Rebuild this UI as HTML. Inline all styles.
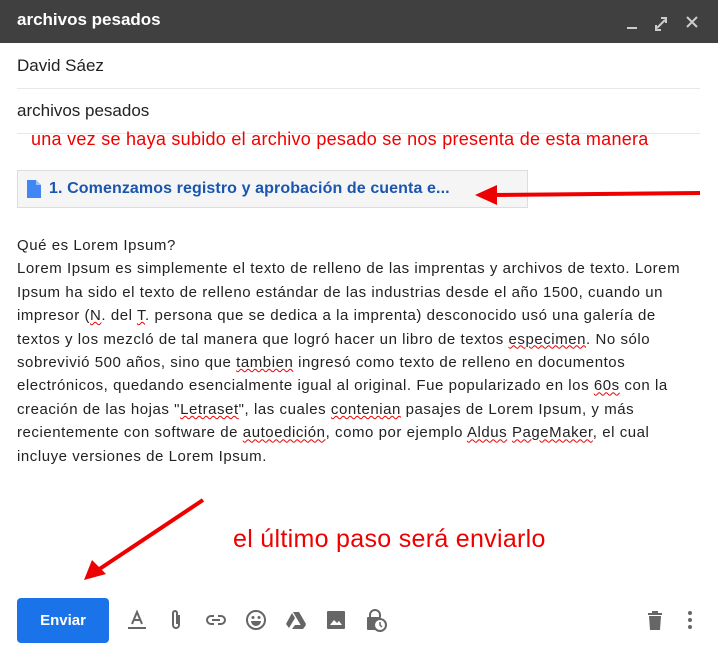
<!DOCTYPE html>
<html><head><meta charset="utf-8"><style>
body{margin:0;width:718px;height:648px;background:#fff;font-family:"Liberation Sans",sans-serif;position:relative;overflow:hidden}
.hdr{position:absolute;left:0;top:0;width:718px;height:43px;background:#404040;color:#fff}
.hdr .t{position:absolute;left:17px;top:10px;font-size:17px;font-weight:bold}
.f{position:absolute;left:17px;width:683px;border-bottom:1px solid #e8e8e8;color:#222;font-size:17px}
.note{position:absolute;left:31px;top:129px;color:#e00;font-size:18px;letter-spacing:0.27px;white-space:nowrap}
.att{position:absolute;left:17px;top:170px;width:509px;height:36px;background:#f5f5f5;border:1px solid #ddd}
.att span{position:absolute;left:31px;top:9px;color:#1a55b0;font-weight:bold;font-size:16px;letter-spacing:0.1px;white-space:nowrap}
.body{position:absolute;left:17px;top:234px;width:700px;font-size:15px;letter-spacing:0.55px;line-height:23.4px;color:#222;white-space:nowrap}
u{text-decoration:underline wavy #e00;text-decoration-thickness:1px}
.btn{position:absolute;left:17px;top:598px;width:92px;height:45px;background:#1a73e8;border-radius:4px;color:#fff;font-weight:bold;font-size:15px;text-align:center;line-height:45px}
.red2{position:absolute;left:233px;top:525px;color:#e00;font-size:25px;letter-spacing:0.3px;white-space:nowrap}
svg.i{position:absolute;top:609px}
</style></head><body>
<div class="hdr"><div class="t">archivos pesados</div>
<svg style="position:absolute;left:620px;top:12px" width="90" height="20"><g stroke="#ccc" stroke-width="2" fill="none"><path d="M7 16h10"/><path d="M37 16l8-8M41 6h5v5M36 13v5h5"/><path d="M67 5l10 10M77 5l-10 10"/></g></svg>
</div>
<div class="f" style="top:56px;height:32px">David Sáez</div>
<div class="f" style="top:101px;height:32px">archivos pesados</div>
<div class="note">una vez se haya subido el archivo pesado se nos presenta de esta manera</div>
<div class="att"><svg style="position:absolute;left:9px;top:9px" width="14" height="18"><path d="M0 0h9l5 5v13H0z" fill="#4285f4"/><path d="M9 0v5h5" fill="#a1c2fa"/></svg><span>1. Comenzamos registro y aprobación de cuenta e...</span></div>
<svg style="position:absolute;left:0;top:0" width="718" height="648"><g fill="#e00" stroke="#e00"><path d="M700 193L490 195" stroke-width="4"/><path d="M475 195l22-10v20z" stroke="none"/><path d="M203 500L98 570" stroke-width="4"/><path d="M84 580l8-20 14 14z" stroke="none"/></g></svg>
<div class="body">Qué es Lorem Ipsum?<br>Lorem Ipsum es simplemente el texto de relleno de las imprentas y archivos de texto. Lorem<br>Ipsum ha sido el texto de relleno estándar de las industrias desde el año 1500, cuando un<br>impresor (<u>N</u>. del <u>T</u>. persona que se dedica a la imprenta) desconocido usó una galería de<br>textos y los mezcló de tal manera que logró hacer un libro de textos <u>especimen</u>. No sólo<br>sobrevivió 500 años, sino que <u>tambien</u> ingresó como texto de relleno en documentos<br>electrónicos, quedando esencialmente igual al original. Fue popularizado en los <u>60s</u> con la<br>creación de las hojas "<u>Letraset</u>", las cuales <u>contenian</u> pasajes de Lorem Ipsum, y más<br>recientemente con software de <u>autoedición</u>, como por ejemplo <u>Aldus</u> <u>PageMaker</u>, el cual<br>incluye versiones de Lorem Ipsum.</div>
<div class="red2">el último paso será enviarlo</div>
<div class="btn">Enviar</div>
<svg class="i" style="left:126px" width="22" height="22"><path d="M6 15L11 3l5 12M8 11h6" stroke="#666" stroke-width="2" fill="none"/><rect x="2" y="18" width="18" height="2" fill="#666"/></svg>
<svg class="i" style="left:166px" width="22" height="22"><path d="M13 6v10a3 3 0 01-6 0V4a2 2 0 014 0v11" stroke="#666" stroke-width="2" fill="none"/></svg>
<svg class="i" style="left:205px" width="22" height="22"><path d="M9 7H6a4 4 0 000 8h3M13 7h3a4 4 0 010 8h-3M7 11h8" stroke="#666" stroke-width="2" fill="none"/></svg>
<svg class="i" style="left:245px" width="22" height="22"><circle cx="11" cy="11" r="9" stroke="#666" stroke-width="2" fill="none"/><circle cx="8" cy="8.5" r="1.5" fill="#666"/><circle cx="14" cy="8.5" r="1.5" fill="#666"/><path d="M6 12h10a5 5 0 01-10 0z" fill="#666"/></svg>
<svg class="i" style="left:285px" width="22" height="22"><path d="M8 3h6l7 12-3 5zM7 4l3 5-6 10-3-4zM10 16h11l-3 4H7z" fill="#666"/></svg>
<svg class="i" style="left:325px" width="22" height="22"><rect x="2" y="2" width="18" height="18" rx="1" fill="#666"/><path d="M5 16l4-5 3 3 2-2 3 4z" fill="#fff"/></svg>
<svg class="i" style="left:364px" width="24" height="24"><path d="M6 8V6a5 5 0 0110 0v2" stroke="#666" stroke-width="2" fill="none"/><rect x="3" y="8" width="14" height="13" rx="1" fill="#666"/><circle cx="16" cy="16" r="6" fill="#fff" stroke="#666" stroke-width="2"/><path d="M16 13v3l2 2" stroke="#666" stroke-width="1.5" fill="none"/></svg>
<svg class="i" style="left:644px" width="22" height="22"><path d="M4 4h14v2H4zM8 2h6v2H8zM5 7h12l-1 14H6z" fill="#666"/></svg>
<svg class="i" style="left:680px" width="20" height="22"><circle cx="10" cy="4" r="2" fill="#666"/><circle cx="10" cy="11" r="2" fill="#666"/><circle cx="10" cy="18" r="2" fill="#666"/></svg>
</body></html>
